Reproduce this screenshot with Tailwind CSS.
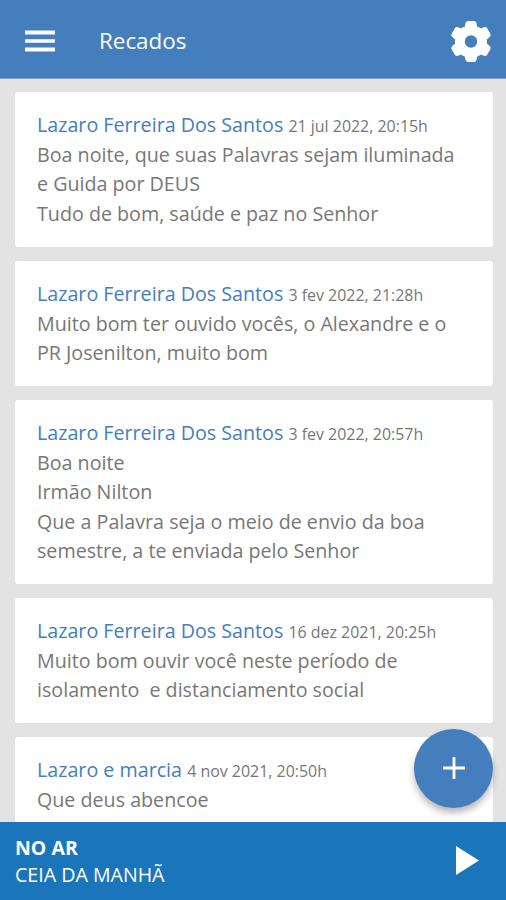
<!DOCTYPE html>
<html lang="pt"><head><meta charset="utf-8"><title>Recados</title>
<script src="https://cdn.jsdelivr.net/npm/@tailwindcss/browser@4"></script></head>
<body class="h-[900px] w-[506px] overflow-hidden bg-[#e3e3e3] font-['Open_Sans',sans-serif]">
<div class="relative flex h-[900px] flex-col">
<header class="z-10 flex h-[79px] shrink-0 items-center border-b border-[#7fa6d2] bg-[#457ebd] pt-1 pr-[14px] pl-[25px] text-white">
<svg class="h-[22px] w-[30px]" viewBox="0 0 30 22" fill="currentColor"><path d="M0 .5h30v4H0zM0 9.300h30v3.500H0zM0 17.500h30v4H0z"/></svg>
<h1 class="mb-[1px] ml-[44px] flex-1 text-[22.400px] leading-[30px]">Recados</h1>
<svg class="h-[42px] w-[42px]" viewBox="-21 -21.500 42 42" fill="currentColor" stroke="currentColor" stroke-width="5" stroke-linejoin="round"><path fill-rule="evenodd" d="M-3 -18H3L4 -13.500L9.500 -10.500L14 -12L17.200 -6.500L13.500 -3.200V3.200L17.200 6.500L14 12L9.500 10.500L4 13.500L3 18H-3L-4 13.500L-9.500 10.500L-14 12L-17.200 6.500L-13.500 3.200V-3.200L-17.200 -6.500L-14 -12L-9.500 -10.500L-4 -13.500ZM8.700 0A8.700 8.700 0 1 0 -8.700 0A8.700 8.700 0 1 0 8.700 0Z"/></svg>
</header>
<main class="flex min-h-0 flex-1 flex-col gap-[14px] overflow-hidden pr-[13.500px] pl-[14.500px] pt-[13px] text-[19.680px] leading-[29.400px] font-normal text-[#777]">
<article class="h-[155px] shrink-0 rounded-[3px] bg-white px-[22.500px] pt-[18.300px] whitespace-nowrap"><p><span class="text-[#447ebf]">Lazaro Ferreira Dos Santos</span> <span class="text-[15.950px] leading-none">21 jul 2022, 20:15h</span></p><p>Boa noite, que suas Palavras sejam iluminada</p><p>e Guida por DEUS</p><p>Tudo de bom, saúde e paz no Senhor</p></article>
<article class="h-[125px] shrink-0 rounded-[3px] bg-white px-[22.500px] pt-[18.300px] whitespace-nowrap"><p><span class="text-[#447ebf]">Lazaro Ferreira Dos Santos</span> <span class="text-[15.950px] leading-none">3 fev 2022, 21:28h</span></p><p>Muito bom ter ouvido vocês, o Alexandre e o</p><p>PR Josenilton, muito bom</p></article>
<article class="h-[184px] shrink-0 rounded-[3px] bg-white px-[22.500px] pt-[18.300px] whitespace-nowrap"><p><span class="text-[#447ebf]">Lazaro Ferreira Dos Santos</span> <span class="text-[15.950px] leading-none">3 fev 2022, 20:57h</span></p><p>Boa noite</p><p>Irmão Nilton</p><p>Que a Palavra seja o meio de envio da boa</p><p>semestre, a te enviada pelo Senhor</p></article>
<article class="h-[125px] shrink-0 rounded-[3px] bg-white px-[22.500px] pt-[18.300px] whitespace-nowrap"><p><span class="text-[#447ebf]">Lazaro Ferreira Dos Santos</span> <span class="text-[15.950px] leading-none">16 dez 2021, 20:25h</span></p><p>Muito bom ouvir você neste período de</p><p>isolamento&nbsp; e distanciamento social</p></article>
<article class="h-[125px] shrink-0 rounded-[3px] bg-white px-[22.500px] pt-[18.300px] whitespace-nowrap"><p><span class="text-[#447ebf]">Lazaro e marcia</span> <span class="text-[15.950px] leading-none">4 nov 2021, 20:50h</span></p><p>Que deus abencoe</p></article>
</main>
<button class="absolute top-[728.500px] left-[414px] flex h-[79px] w-[79px] items-center justify-center rounded-full bg-[#457ebd] text-white shadow-[0_5px_7px_rgba(0,0,0,0.28)]" aria-label="Novo recado"><svg class="h-[22px] w-[22px]" viewBox="0 0 22 22" fill="currentColor"><path d="M9.600 0h2.800v9.600H22v2.800h-9.600V22h-2.800v-9.600H0v-2.800h9.600z"/></svg></button>
<footer class="flex h-[78px] shrink-0 items-center justify-between bg-[#1a75bb] pr-[27px] pl-[15px] text-white"><div class="text-[19.600px] leading-[27px]"><p class="text-[19.500px] font-bold">NO AR</p><p>CEIA DA MANHÃ</p></div><svg class="mb-[2px] h-[29px] w-[23px]" viewBox="0 0 23 29" fill="currentColor"><path d="M0 0l23 14.500L0 29z"/></svg></footer>
</div></body></html>
